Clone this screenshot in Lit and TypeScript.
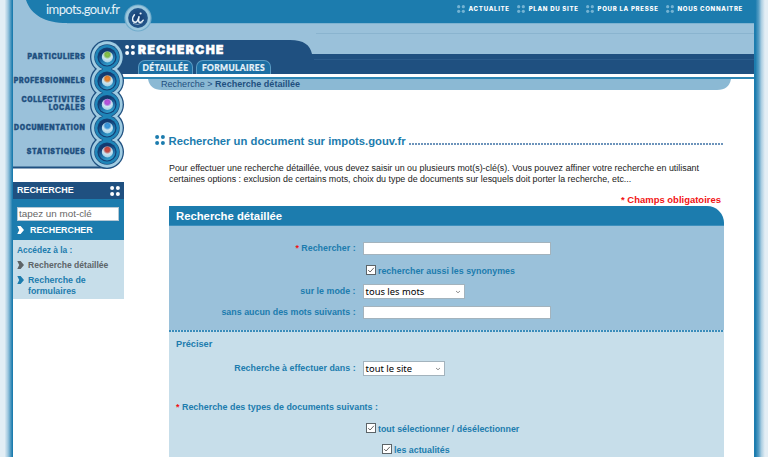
import { LitElement, html, svg, css } from "lit";
import { customElement, property } from "lit/decorators.js";
import { classMap } from "lit/directives/class-map.js";

@customElement("four-dots")
class FourDots extends LitElement {
  static styles = css`
    :host { display: block; width: 10px; height: 10px; flex: none; }
    svg { display: block; width: 100%; height: 100%; }
  `;
  render() {
    return html`<svg viewBox="0 0 10 10" fill="currentColor">
      <circle cx="2.1" cy="2.1" r="2"/><circle cx="7.9" cy="2.1" r="2"/>
      <circle cx="2.1" cy="7.9" r="2"/><circle cx="7.9" cy="7.9" r="2"/>
    </svg>`;
  }
}

@customElement("check-box")
class CheckBox extends LitElement {
  @property() label = "";
  static styles = css`
    :host { display: flex; align-items: flex-start; font: bold 8.87px/12px "Liberation Sans", Arial, sans-serif; color: #1c7cae; white-space: nowrap; }
    svg { display: block; width: 10px; height: 10px; margin-right: 2px; flex: none; }
  `;
  render() {
    return html`<svg viewBox="0 0 10 10"><rect x=".5" y=".5" width="9" height="9" fill="#fff" stroke="#5c6468"/>
      <path d="M2.2 5.1 4.1 7 7.9 2.8" fill="none" stroke="#555" stroke-width=".9"/></svg><span>${this.label}</span>`;
  }
}

@customElement("select-box")
class SelectBox extends LitElement {
  @property() value = "";
  static styles = css`
    :host { display: flex; align-items: center; justify-content: space-between; box-sizing: border-box; height: 15px; padding: 0 3px 0 2px;
      border: 1px solid #a3b3bd; background: #fff; color: #000; font: 9.4px/13px "Noto Sans", sans-serif; white-space: nowrap; }
    svg { width: 6px; height: 4px; }
  `;
  render() {
    return html`<span>${this.value}</span><svg viewBox="0 0 6 4"><path d="M1 1 3 2.8 5 1" fill="none" stroke="#777" stroke-width=".8"/></svg>`;
  }
}

const BALLS = [
  { y: 57, c: "#8cc63f" },
  { y: 81, c: "#f58220" },
  { y: 104.5, c: "#c250e0" },
  { y: 128, c: "#3d9be0" },
  { y: 152, c: "#d64a3c" },
];

@customElement("site-art")
class SiteArt extends LitElement {
  static styles = css`
    :host { display: block; }
    svg { display: block; }
  `;
  ring(r: number, neck: number, fill: string) {
    return svg`<g fill=${fill}>
      <rect x=${94 - neck} y="57" width=${neck * 2} height="95"/>
      ${BALLS.map((b) => svg`<circle cx="94" cy=${b.y} r=${r}/>`)}</g>`;
  }
  render() {
    return html`<svg width="741" height="170" viewBox="0 0 741 170">
      <defs>
        <linearGradient id="well" x1=".2" y1="0" x2=".6" y2="1">
          <stop offset=".25" stop-color="#123a70"/><stop offset=".6" stop-color="#1b6ba4"/><stop offset="1" stop-color="#35a3d0"/>
        </linearGradient>
        <radialGradient id="seal"><stop offset=".3" stop-color="#1a4378"/><stop offset="1" stop-color="#24588c"/></radialGradient>
        ${BALLS.map((b, i) => svg`<radialGradient id=${"b" + i} cx=".5" cy=".3" r=".68">
          <stop offset="0" stop-color=${b.c}/><stop offset=".3" stop-color=${b.c} stop-opacity=".85"/><stop offset=".58" stop-color="#cde6f1"/><stop offset="1" stop-color="#9fcfe5"/></radialGradient>`)}
      </defs>
      <rect width="741" height="24" fill="#1c7cae"/>
      <path d="M0 0H13C18 15 32 23 54 23H741V55H0Z" fill="#9ac1da"/>
      <path d="M54 23.5H741" stroke="#7fb3d1"/>
      <path d="M303 33.5H741" stroke="#8ab4cf"/>
      <path d="M0 54H94V152H110Q108 168.5 92 168.5H0Z" fill="#1f5080"/>
      <path d="M0 50H94V152H108Q106 166.5 90 166.5H0Z" fill="#9ac1da"/>
      <path d="M94 40H277C291 40 297 45 299 54H741V74H94Z" fill="#1f5080"/>
      <path d="M301 59.5H741" stroke="#2b5c8c"/>
      <path d="M106 77H741V79H106Z" fill="#2e86b4"/>
      <path d="M135 79H718Q716 90 704 90H149Q137 90 135 79Z" fill="#8bb9d4"/>
      ${this.ring(17, 10.5, "#1f5080")}
      ${this.ring(15.7, 8.8, "#a0cce2")}
      ${this.ring(12.8, 5, "#1f5080")}
      ${this.ring(12.1, 4.4, "#1f85b8")}
      ${BALLS.map((b, i) => svg`<circle cx="94" cy=${b.y} r="9.6" fill="#143f74"/>
        <circle cx="94" cy=${b.y} r="8.4" fill="url(#well)"/>
        <circle cx="94.4" cy=${b.y - 0.1} r="5.6" fill=${`url(#b${i})`}/>`)}
      <circle cx="125" cy="18" r="13.6" fill="#6fabcb"/>
      <circle cx="125" cy="18" r="12.4" fill="#9cc8de"/>
      <circle cx="125" cy="18" r="9.9" fill="url(#seal)"/>
      <path d="M121.4 14.8C118.4 18.4 119.4 22 122.2 22.2C124.8 22.2 125.4 18.5 126.2 16.2C125.2 19.6 125.2 22.4 127 22.4C128.4 22.4 129.4 21.4 130.2 20.2" fill="none" stroke="#eaf4fa" stroke-width="1.5" stroke-linecap="round"/>
      <path d="M120 23.4Q125 26 129.6 22.6" fill="none" stroke="#cfe3ef" stroke-width=".6"/>
      <circle cx="127.6" cy="13.5" r="1.1" fill="#eaf4fa"/>
    </svg>`;
  }
}

@customElement("app-root")
class AppRoot extends LitElement {
  static styles = css`
    :host { display: grid; grid-template-columns: 13px 741px 14px; width: 768px; height: 457px; overflow: hidden; background: #e3eef5;
      font-family: "Liberation Sans", Arial, sans-serif; color: #1c7cae; white-space: nowrap; }
    .edge-l { background: linear-gradient(90deg, #e3eef5 35%, #9cc6de 62%, #1c7cae 95%); }
    .edge-r { background: linear-gradient(90deg, #1c7cae 10%, #5ba0c6 35%, #a9cde1 52%, #e3eef5 78%); }
    .page { position: relative; height: 457px; overflow: hidden; background: #fff; }
    .art { position: absolute; left: 0; top: 0; }
    .content { position: relative; }
    .top { display: flex; justify-content: space-between; height: 40px; padding: 0 11px 0 33px; }
    .brand { font: 13px/19px Lato, sans-serif; letter-spacing: -.58px; color: #e4f1f8; }
    .links { display: flex; gap: 7.6px; padding-top: 5px; height: 8px; }
    .link { display: flex; align-items: center; gap: 3.3px; font: 800 6.1px/8px Inter, sans-serif; letter-spacing: .68px; color: #fff; }
    .link four-dots { width: 8px; height: 8px; color: #74b3d3; }
    .cols { display: flex; }
    .left { width: 111px; flex: none; }
    .right { flex: 1; }
    .nav { display: flex; flex-direction: column; align-items: flex-end; height: 142px; box-sizing: border-box; padding: 5px 38.5px 0 0;
      font: 900 6.9px/8px Inter, sans-serif; letter-spacing: .66px; color: #1f5080; -webkit-text-stroke: .3px #1f5080; text-align: right; }
    .nav div { height: 23.7px; display: flex; align-items: center; }
    .side-title { display: flex; align-items: center; justify-content: space-between; height: 17px; box-sizing: border-box; padding: 0 4px 0 4px; background: #1f5080; color: #fff; font: bold 8.95px/17px "Liberation Sans"; }
    .side-search { height: 41px; background: #1c7cae; padding: 8px 5px 0 4px; box-sizing: border-box; }
    .kw { height: 14px; box-sizing: border-box; border: 1px solid #b5c8d4; background: #fff; color: #666; font: 9.85px/12px "Liberation Sans"; padding-left: 1px; }
    .go { display: flex; gap: 6px; align-items: center; color: #fff; font: bold 8.9px/12px "Liberation Sans"; padding-top: 3px; }
    .chev { width: 7px; height: 8px; flex: none; display: block; }
    .side-links { height: 59px; box-sizing: border-box; background: #c7deea; padding: 5px 4px 0; font: bold 8.8px/11px "Liberation Sans"; }
    .ask { font-size: 8.4px; }
    .side-link { display: flex; gap: 4px; padding-top: 4px; }
    .side-link.grey { font-size: 8.55px; color: #5d6468; }
    .side-link .chev { margin-top: 1px; }
    .title { display: flex; align-items: center; height: 20px; padding-left: 1px; gap: 3px; color: #fff; font: 900 11.9px/20px Inter, sans-serif; letter-spacing: 1.5px; -webkit-text-stroke: .6px #fff; }
    .tabs { display: flex; gap: 3px; height: 14px; padding-left: 14px; }
    .tab { box-sizing: border-box; height: 14px; border: 1px solid #5b9cc4; border-bottom: 0; border-radius: 7px 7px 0 0; background: #1c6fa4; color: #e8f3f9; font: 900 8.4px/14px Lato, sans-serif; letter-spacing: .4px; -webkit-text-stroke: .2px #e8f3f9; text-align: center; width: 55px; }
    .tab.wide { width: 75px; }
    .crumb { height: 17px; box-sizing: border-box; padding: 5px 0 0 37px; font-size: 9.05px; line-height: 11px; color: #1f5080; }
    .doc { padding: 43px 30px 0 31px; }
    .h1 { display: flex; align-items: center; font: bold 11.27px/14px "Liberation Sans"; gap: 3.5px; }
    .h1 four-dots { margin-top: -3px; }
    .rule { flex: 1; height: 2px; margin-top: 5px; background: repeating-linear-gradient(90deg, #6d94bb 0 2px, #fff 2px 3px); }
    .main { margin-left: 14px; }
    .intro { padding-top: 15px; font-size: 8.89px; line-height: 10.7px; color: #222; height: 37px; box-sizing: border-box; }
    .must { text-align: right; padding: 9px 3px 0 0; font: bold 9.48px/11px "Liberation Sans"; color: #f21313; height: 21px; box-sizing: border-box; }
    .star { color: #f21313; }
    .panel-head { height: 20px; box-sizing: border-box; border-bottom: 1px solid #3d8fbc; border-radius: 0 17px 0 0; background: #1c7cae; color: #fff; font: bold 11.3px/20px "Liberation Sans"; padding-left: 7px; }
    .form { display: grid; grid-template-columns: 186.6px auto; column-gap: 7px; justify-content: start; justify-items: start; background: #9ac1da; height: 104px; box-sizing: border-box; padding-top: 15px; grid-template-rows: 23px 20px 21px 20px; }
    .lab { justify-self: end; font: bold 8.9px/13px "Liberation Sans"; padding-top: 1px; }
    .field { width: 188px; height: 13px; box-sizing: border-box; border: 1px solid #a3b3bd; background: #fff; margin-top: 1px; }
    .ind { margin: 1px 0 0 3.4px; }
    .sel1 { width: 102px; }
    .sel2 { width: 82px; }
    .dots { height: 2px; background: repeating-linear-gradient(90deg, #3b8dbb 0 2px, #c7deea 2px 3px); }
    .more { background: #c7deea; height: 140px; padding-top: 6px; box-sizing: border-box; font: bold 8.91px/13px "Liberation Sans"; }
    .pad { padding-left: 7px; }
    .big { font-size: 9.2px; }
    .row { display: grid; grid-template-columns: 186.6px auto; column-gap: 7px; justify-content: start; padding-top: 10px; height: 50px; box-sizing: border-box; }
    .c1 { margin: 9px 0 0 197px; }
    .c2 { margin: 9px 0 0 213px; }
  `;

  chev(color: string) {
    return html`<svg class="chev" viewBox="0 0 7 8"><path d="M.3 0H3.6L7 4 3.6 8H.3L2.2 4Z" fill=${color}/></svg>`;
  }

  render() {
    return html`
      <div class="edge-l"></div>
      <div class="page">
        <site-art class="art"></site-art>
        <div class="content">
          <div class="top">
            <div class="brand">impots.gouv.fr</div>
            <div class="links">
              ${["ACTUALITE", "PLAN DU SITE", "POUR LA PRESSE", "NOUS CONNAITRE"].map((t) => html`<div class="link"><four-dots></four-dots>${t}</div>`)}
            </div>
          </div>
          <div class="cols">
            <div class="left">
              <div class="nav">
                <div>PARTICULIERS</div><div>PROFESSIONNELS</div><div>COLLECTIVITES<br>LOCALES</div><div>DOCUMENTATION</div><div>STATISTIQUES</div>
              </div>
              <div class="side-title">RECHERCHE<four-dots></four-dots></div>
              <div class="side-search">
                <div class="kw">tapez un mot-clé</div>
                <div class="go">${this.chev("#fff")}RECHERCHER</div>
              </div>
              <div class="side-links">
                <div class="ask">Accédez à la :</div>
                <div class="side-link grey">${this.chev("#5d6468")}Recherche détaillée</div>
                <div class="side-link">${this.chev("#1c7cae")}<span>Recherche de<br>formulaires</span></div>
              </div>
            </div>
            <div class="right">
              <div class="title"><four-dots></four-dots>RECHERCHE</div>
              <div class="tabs">
                ${["DÉTAILLÉE", "FORMULAIRES"].map((t, i) => html`<div class=${classMap({ tab: true, wide: i === 1 })}>${t}</div>`)}
              </div>
              <div class="crumb">Recherche &gt; <b>Recherche détaillée</b></div>
              <div class="doc">
                <div class="h1"><four-dots></four-dots>Rechercher un document sur impots.gouv.fr<div class="rule"></div></div>
                <div class="main">
                  <div class="intro">Pour effectuer une recherche détaillée, vous devez saisir un ou plusieurs mot(s)-clé(s). Vous pouvez affiner votre recherche en utilisant<br>certaines options : exclusion de certains mots, choix du type de documents sur lesquels doit porter la recherche, etc...</div>
                  <div class="must">* Champs obligatoires</div>
                  <div class="panel-head">Recherche détaillée</div>
                  <div class="form">
                    <div class="lab"><span class="star">*</span> Rechercher :</div><div class="field"></div>
                    <div></div><check-box class="ind" label="rechercher aussi les synonymes"></check-box>
                    <div class="lab">sur le mode :</div><select-box class="sel1" value="tous les mots"></select-box>
                    <div class="lab">sans aucun des mots suivants :</div><div class="field"></div>
                  </div>
                  <div class="dots"></div>
                  <div class="more">
                    <div class="pad big">Préciser</div>
                    <div class="row"><div class="lab">Recherche à effectuer dans :</div><select-box class="sel2" value="tout le site"></select-box></div>
                    <div class="pad"><span class="star">*</span> Recherche des types de documents suivants :</div>
                    <check-box class="c1" label="tout sélectionner / désélectionner"></check-box>
                    <check-box class="c2" label="les actualités"></check-box>
                  </div>
                </div>
              </div>
            </div>
          </div>
        </div>
      </div>
      <div class="edge-r"></div>`;
  }
}
